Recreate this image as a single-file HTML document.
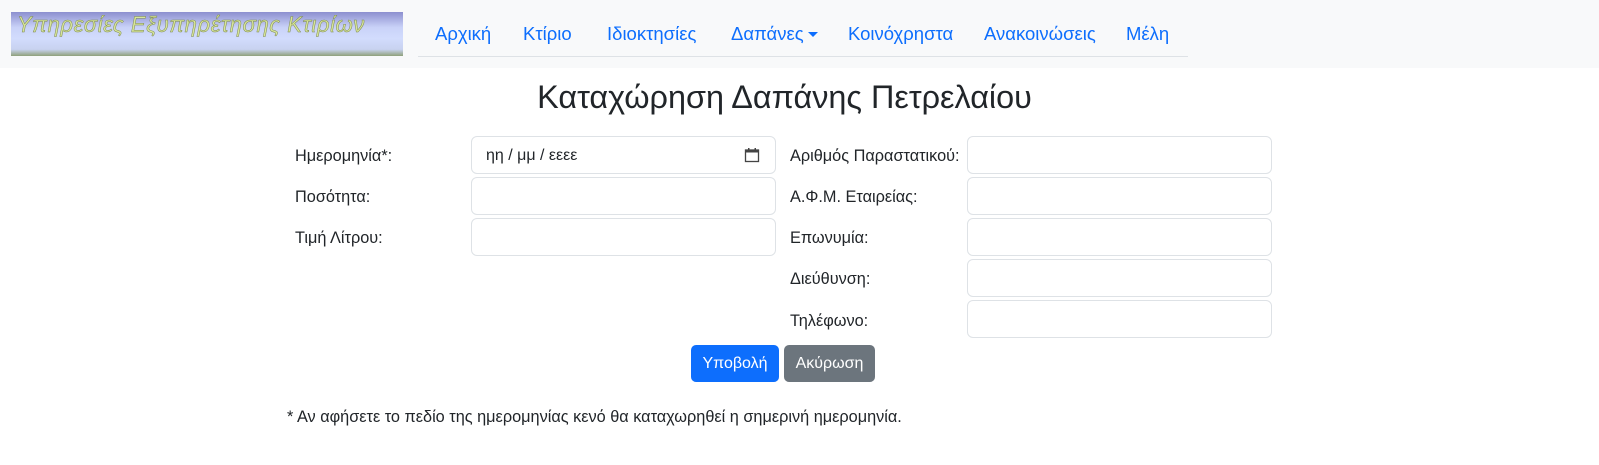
<!DOCTYPE html>
<html><head><meta charset="utf-8"><style>
body{margin:0;width:1599px;height:465px;background:#fff;font-family:"Liberation Sans","DejaVu Sans",sans-serif;color:#212529;position:relative;overflow:hidden}
.nav{position:absolute;left:0;top:0;width:1599px;height:68px;background:#f8f9fa}
.logo{position:absolute;left:11px;top:12px;width:392px;height:44px;background:linear-gradient(#8c8fcf 0%,#c9d2f8 35%,#d2dcfd 60%,#c8d2f0 85%,#8fa07a 100%);overflow:hidden}
.logo span{position:absolute;left:6px;top:0px;font-style:italic;font-size:22px;color:#d8e69a;-webkit-text-stroke:0.5px #7d8a50;white-space:nowrap;letter-spacing:0.6px}
.links{position:absolute;left:418px;top:0;width:770px;height:56px;border-bottom:1px solid #dee2e6}
.links a{position:absolute;top:23px;font-size:18.5px;color:#0d6efd;text-decoration:none;white-space:nowrap}
h1{position:absolute;top:79px;left:0;width:1569px;text-align:center;margin:0;font-weight:400;font-size:32.4px}
.lbl{position:absolute;font-size:16.3px}
.inp{position:absolute;width:303px;height:36px;border:1px solid #dee2e6;border-radius:6px;background:#fff}
.btn{position:absolute;top:345px;height:37px;border-radius:5px;color:#fff;font-size:16px;line-height:37px;text-align:center}
</style></head><body>
<div class="nav">
<div class="logo"><span>Υπηρεσίες Εξυπηρέτησης Κτιρίων</span></div>
<div class="links">
<a style="left:17px">Αρχική</a>
<a style="left:105px">Κτίριο</a>
<a style="left:189px">Ιδιοκτησίες</a>
<a style="left:313px">Δαπάνες<span style="display:inline-block;margin-left:4px;border-left:5px solid transparent;border-right:5px solid transparent;border-top:5px solid #0d6efd;vertical-align:3px"></span></a>
<a style="left:430px">Κοινόχρηστα</a>
<a style="left:566px">Ανακοινώσεις</a>
<a style="left:708px">Μέλη</a>
</div></div>
<h1>Καταχώρηση Δαπάνης Πετρελαίου</h1>
<div class="lbl" style="left:295px;top:147px">Ημερομηνία*:</div>
<div class="lbl" style="left:295px;top:188px">Ποσότητα:</div>
<div class="lbl" style="left:295px;top:229px">Τιμή Λίτρου:</div>
<div class="inp" style="left:471px;top:136px"><span style="position:absolute;left:14px;top:10px;font-size:16px">ηη / μμ / εεεε</span>
<svg style="position:absolute;left:272px;top:10px" width="16" height="16" viewBox="0 0 16 16"><rect x="1.5" y="3" width="13" height="11.5" fill="none" stroke="#444" stroke-width="1.3"/><rect x="1.5" y="3" width="13" height="2.5" fill="#444"/><rect x="4" y="1" width="1.5" height="3" fill="#444"/><rect x="10.5" y="1" width="1.5" height="3" fill="#444"/></svg></div>
<div class="inp" style="left:471px;top:177px"></div>
<div class="inp" style="left:471px;top:218px"></div>
<div class="lbl" style="left:790px;top:147px">Αριθμός Παραστατικού:</div>
<div class="lbl" style="left:790px;top:188px">Α.Φ.Μ. Εταιρείας:</div>
<div class="lbl" style="left:790px;top:229px">Επωνυμία:</div>
<div class="lbl" style="left:790px;top:270px">Διεύθυνση:</div>
<div class="lbl" style="left:790px;top:312px">Τηλέφωνο:</div>
<div class="inp" style="left:967px;top:136px"></div>
<div class="inp" style="left:967px;top:177px"></div>
<div class="inp" style="left:967px;top:218px"></div>
<div class="inp" style="left:967px;top:259px"></div>
<div class="inp" style="left:967px;top:300px"></div>
<div class="btn" style="left:691px;width:88px;background:#0d6efd">Υποβολή</div>
<div class="btn" style="left:784px;width:91px;background:#6c757d">Ακύρωση</div>
<div class="lbl" style="left:287px;top:408px">* Αν αφήσετε το πεδίο της ημερομηνίας κενό θα καταχωρηθεί η σημερινή ημερομηνία.</div>
</body></html>
